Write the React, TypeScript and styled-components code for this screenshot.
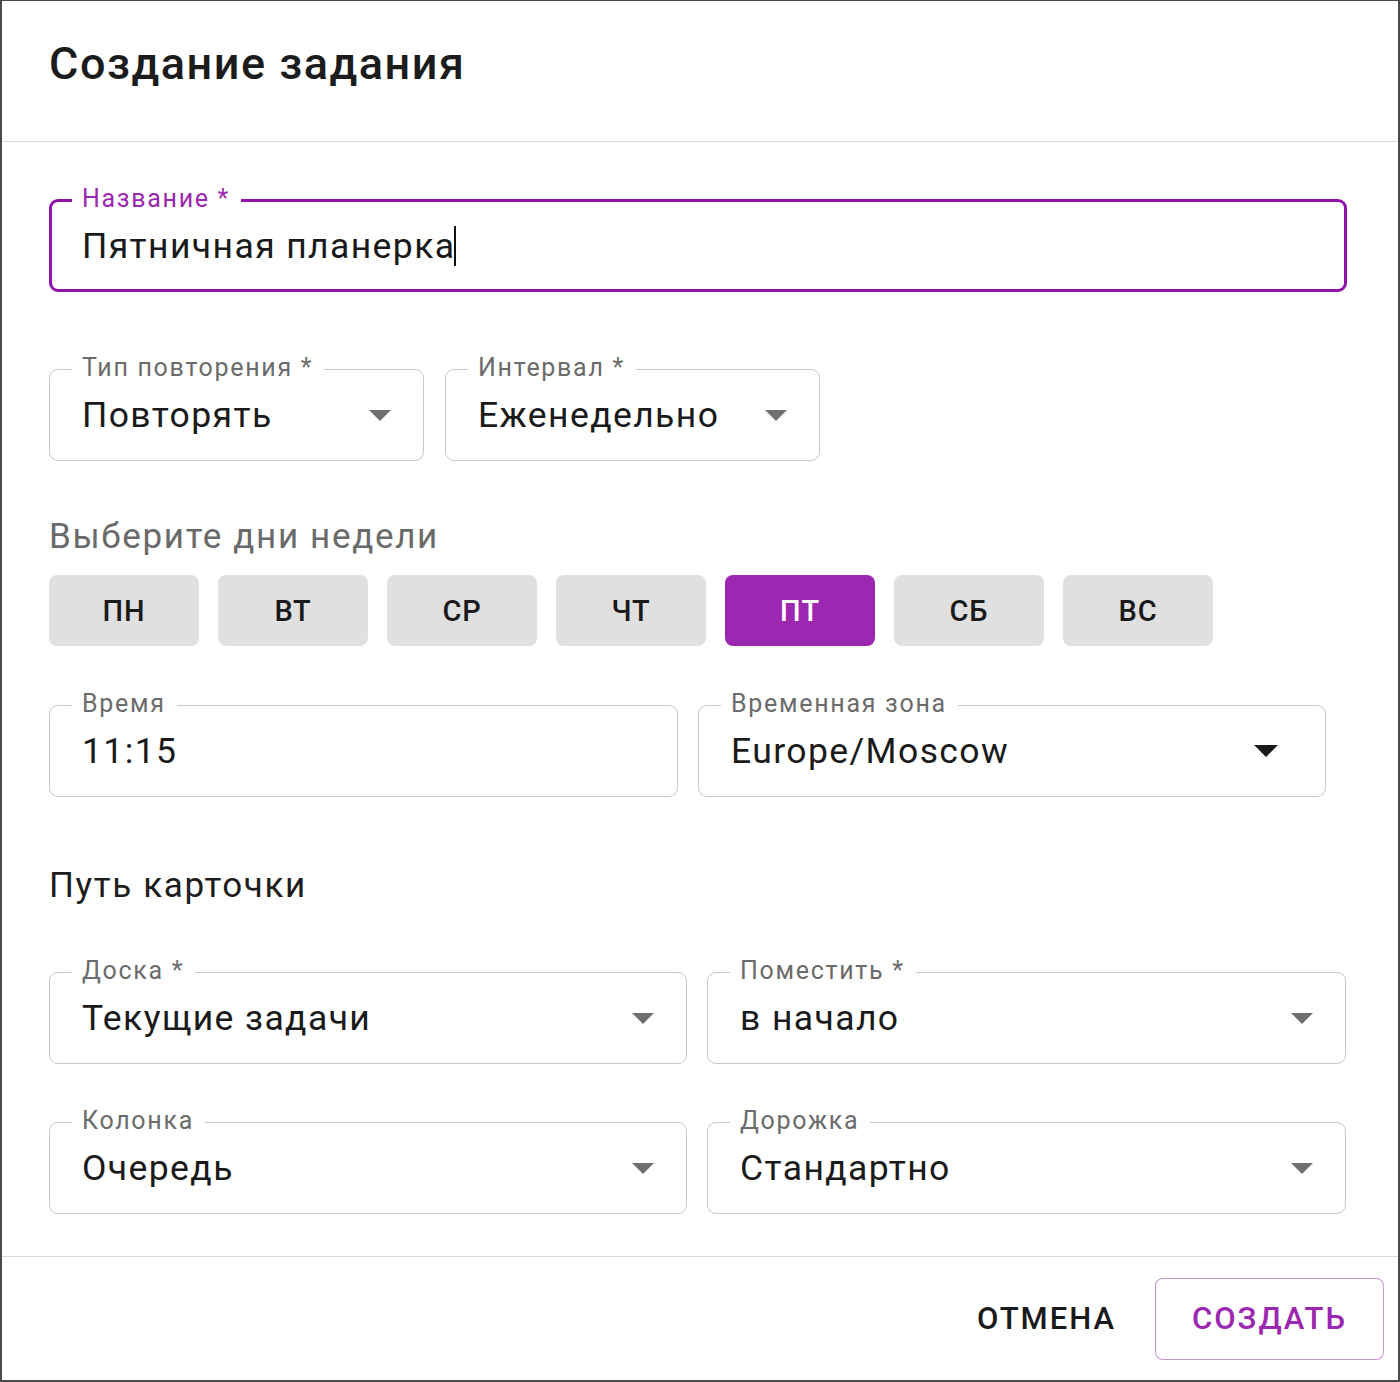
import React from "react";
import styled, { createGlobalStyle } from "styled-components";

const Global = createGlobalStyle`
  html, body { margin: 0; padding: 0; background: #fff; }
  body { font-family: Roboto, "Noto Sans", Arial, sans-serif; color: rgba(0,0,0,0.87); }
  * { box-sizing: border-box; }
`;

const PURPLE = "#9c27b0";

const Dialog = styled.div`
  width: 1400px;
  height: 1382px;
  border: 2px solid #4a4a4a;
  border-top-width: 1px;
  display: flex;
  flex-direction: column;
  background: #fff;
`;

const Header = styled.div`
  height: 141px;
  flex: none;
  display: flex;
  align-items: center;
  padding: 0 47px 16px;
  border-bottom: 1px solid #dcdcdc;
`;

const Title = styled.h1`
  margin: 0;
  font-size: 45px;
  font-weight: 500;
  letter-spacing: 1.5px;
  color: #1c1c1c;
`;

const Content = styled.div`
  flex: 1;
  padding: 57px 52px 0 47px;
  display: flex;
  flex-direction: column;
`;

const Row = styled.div<{ $mt?: number; $gap?: number }>`
  display: flex;
  gap: ${(p) => p.$gap ?? 20}px;
  margin-top: ${(p) => p.$mt ?? 0}px;
`;

const FieldBox = styled.div<{ $w: number; $focused?: boolean; $pr?: number }>`
  position: relative;
  width: ${(p) => p.$w}px;
  height: ${(p) => (p.$focused ? 93 : 92)}px;
  border: ${(p) => (p.$focused ? `3px solid #9012aa` : "1px solid #c8c8c8")};
  border-radius: 9px;
  display: flex;
  align-items: center;
  padding: 0 ${(p) => p.$pr ?? (p.$focused ? 30 : 32)}px 0 ${(p) => (p.$focused ? 30 : 32)}px;
`;

const FieldLabel = styled.span<{ $focused?: boolean }>`
  position: absolute;
  left: ${(p) => (p.$focused ? 20 : 22)}px;
  top: ${(p) => (p.$focused ? -19 : -18)}px;
  padding: 0 11px 0 10px;
  background: #fff;
  font-size: 25px;
  line-height: 32px;
  letter-spacing: 1.7px;
  color: ${(p) => (p.$focused ? PURPLE : "#6b6b6b")};
  white-space: nowrap;
`;

const Value = styled.span`
  font-size: 35.5px;
  letter-spacing: 1.4px;
  color: #1a1a1a;
  flex: 1;
  white-space: nowrap;
`;

const Caret = styled.span`
  display: inline-block;
  width: 2px;
  height: 40px;
  background: #111;
  vertical-align: -8px;
  margin-left: -1px;
`;

const Arrow = styled.span<{ $dark?: boolean }>`
  width: 0;
  height: 0;
  border-left: ${(p) => (p.$dark ? 12 : 11)}px solid transparent;
  border-right: ${(p) => (p.$dark ? 12 : 11)}px solid transparent;
  border-top: ${(p) => (p.$dark ? 12 : 11)}px solid ${(p) => (p.$dark ? "#1a1a1a" : "#6f6f6f")};
  flex: none;
`;

const SectionLabel = styled.div<{ $dark?: boolean; $mt: number }>`
  margin-top: ${(p) => p.$mt}px;
  font-size: 35px;
  line-height: 40px;
  letter-spacing: 1.65px;
  color: ${(p) => (p.$dark ? "#1d1d1d" : "#6a6a6a")};
`;

const Days = styled.div`
  display: flex;
  gap: 19px;
  margin-top: 18px;
`;

const DayButton = styled.button<{ $active?: boolean }>`
  width: 150px;
  height: 71px;
  border: none;
  border-radius: 8px;
  background: ${(p) => (p.$active ? PURPLE : "#e0e0e0")};
  color: ${(p) => (p.$active ? "#fff" : "#1a1a1a")};
  font-family: Roboto, sans-serif;
  font-size: 29px;
  font-weight: 500;
  letter-spacing: 0.8px;
  padding: 0;
`;

const Footer = styled.div`
  height: 124px;
  flex: none;
  border-top: 1px solid #dcdcdc;
  display: flex;
  align-items: center;
  justify-content: flex-end;
  gap: 23px;
  padding: 0 14px 0 0;
`;

const TextButton = styled.button<{ $outlined?: boolean }>`
  height: 82px;
  width: ${(p) => (p.$outlined ? "229px" : "auto")};
  padding: 0 ${(p) => (p.$outlined ? 0 : 16)}px;
  border: ${(p) => (p.$outlined ? "1.5px solid rgba(156,39,176,0.5)" : "none")};
  border-radius: 8px;
  background: #fff;
  color: ${(p) => (p.$outlined ? PURPLE : "#1a1a1a")};
  font-family: Roboto, sans-serif;
  font-size: 31px;
  font-weight: 500;
  letter-spacing: 2px;
  text-transform: uppercase;
`;

type FieldProps = {
  label: string;
  value: string;
  width: number;
  select?: boolean;
  darkArrow?: boolean;
  pr?: number;
};

const Field = ({ label, value, width, select, darkArrow, pr }: FieldProps) => (
  <FieldBox $w={width} $pr={pr}>
    <FieldLabel>{label}</FieldLabel>
    <Value>{value}</Value>
    {select && <Arrow $dark={darkArrow} />}
  </FieldBox>
);

const days = ["ПН", "ВТ", "СР", "ЧТ", "ПТ", "СБ", "ВС"];

export default function App() {
  return (
    <>
      <Global />
      <Dialog>
        <Header>
          <Title>Создание задания</Title>
        </Header>
        <Content>
          <FieldBox $w={1298} $focused>
            <FieldLabel $focused>Название *</FieldLabel>
            <Value>
              Пятничная планерка
              <Caret />
            </Value>
          </FieldBox>
          <Row $mt={77} $gap={21}>
            <Field label="Тип повторения *" value="Повторять" width={375} select />
            <Field label="Интервал *" value="Еженедельно" width={375} select />
          </Row>
          <SectionLabel $mt={56}>Выберите дни недели</SectionLabel>
          <Days>
            {days.map((d) => (
              <DayButton key={d} $active={d === "ПТ"}>
                {d}
              </DayButton>
            ))}
          </Days>
          <Row $mt={59}>
            <Field label="Время" value="11:15" width={629} />
            <Field label="Временная зона" value="Europe/Moscow" width={628} select darkArrow pr={47} />
          </Row>
          <SectionLabel $dark $mt={69}>Путь карточки</SectionLabel>
          <Row $mt={66}>
            <Field label="Доска *" value="Текущие задачи" width={638} select />
            <Field label="Поместить *" value="в начало" width={639} select />
          </Row>
          <Row $mt={58}>
            <Field label="Колонка" value="Очередь" width={638} select />
            <Field label="Дорожка" value="Стандартно" width={639} select />
          </Row>
        </Content>
        <Footer>
          <TextButton>Отмена</TextButton>
          <TextButton $outlined>Создать</TextButton>
        </Footer>
      </Dialog>
    </>
  );
}
